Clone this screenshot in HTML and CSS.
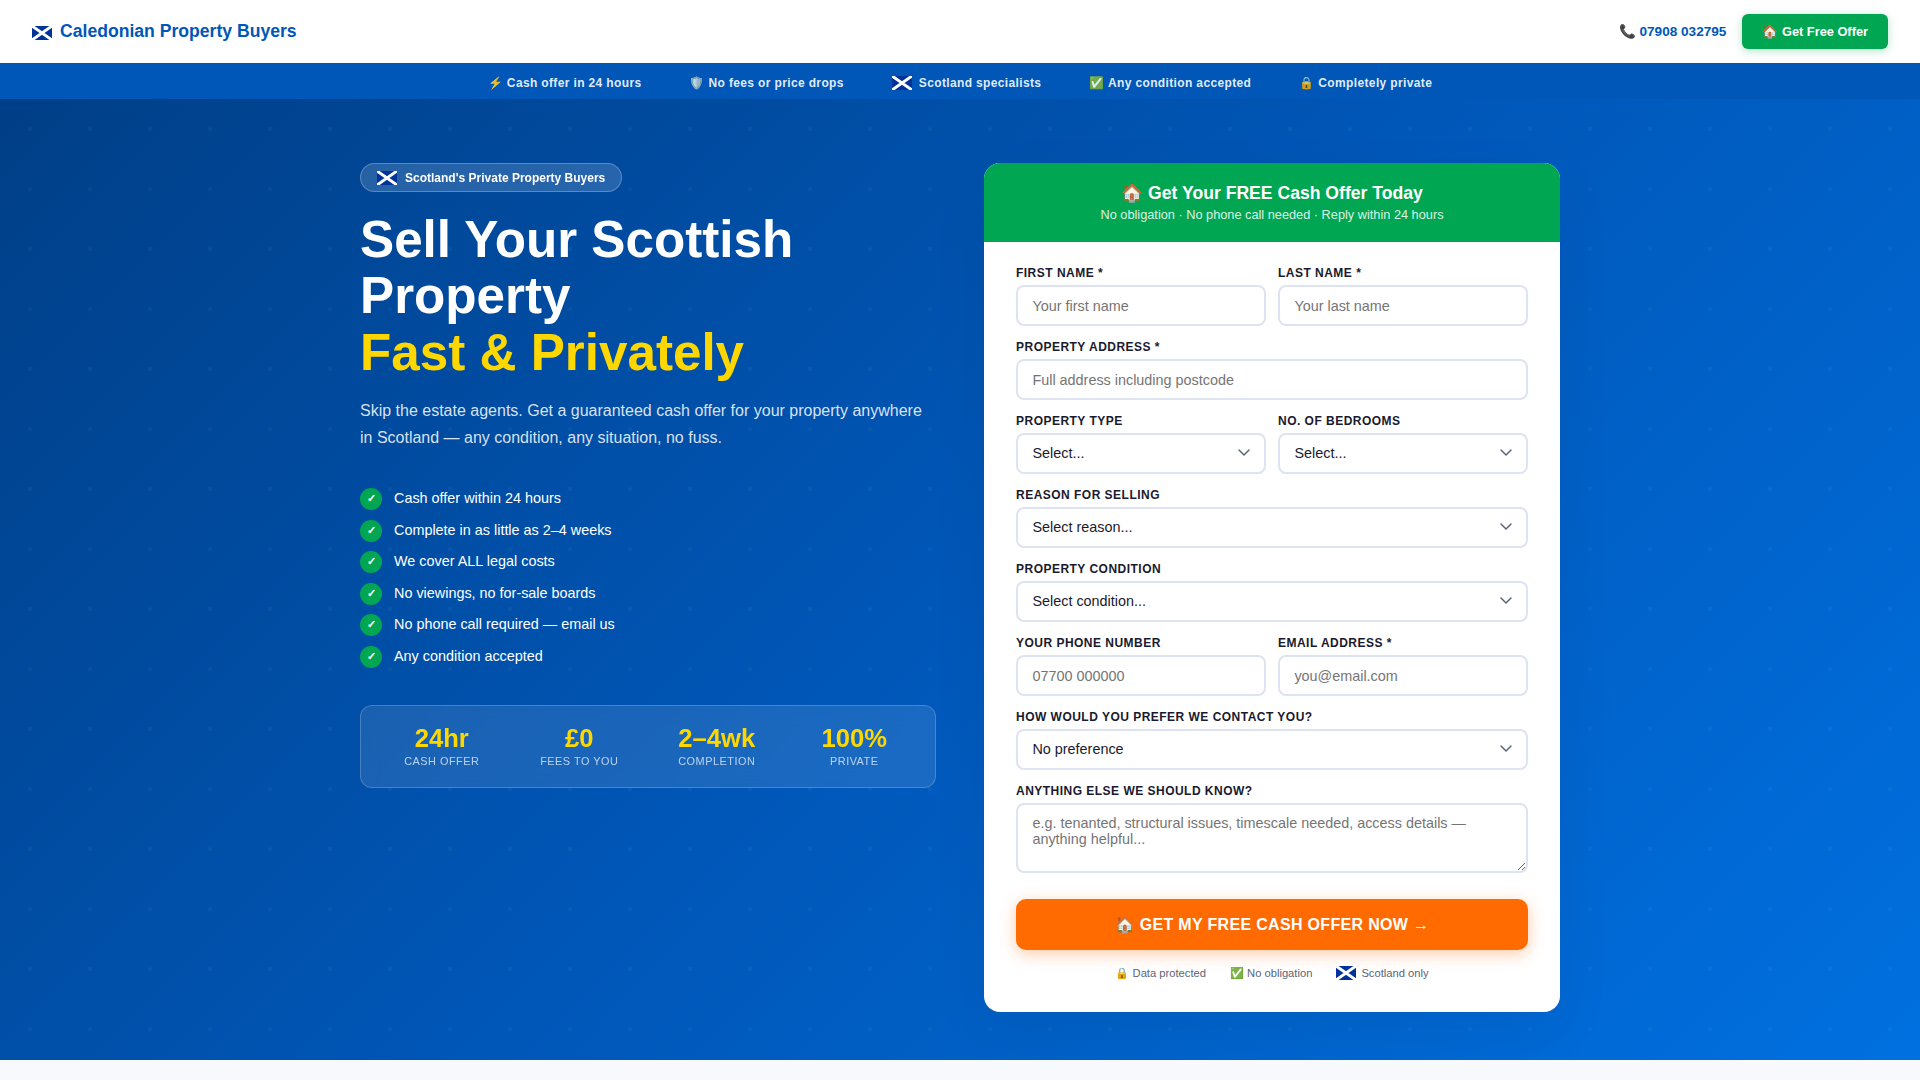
FILE: index.html
```html
<!DOCTYPE html>
<html lang="en">
<head>
    <meta charset="UTF-8">
    <meta name="viewport" content="width=device-width, initial-scale=1.0">
    <title>Caledonian Property Buyers</title>
    <link rel="stylesheet" href="styles.css">
</head>
<body>
    <!-- Saltire used next to the text in several places -->
    <svg class="defs" width="0" height="0">
        <symbol id="saltire" viewBox="0 0 20 14">
            <rect width="20" height="14" fill="#003399"/>
            <path d="M0 0L20 14M20 0L0 14" stroke="#fff" stroke-width="3"/>
        </symbol>
    </svg>

    <!-- Header -->
    <header class="header">
        <a class="logo" href="#"><svg class="flag"><use href="#saltire"/></svg>Caledonian Property Buyers</a>
        <div class="header-right">
            <a class="header-phone" href="tel:07908032795">📞 07908 032795</a>
            <a class="header-btn" href="#form">🏠 Get Free Offer</a>
        </div>
    </header>

    <!-- Trust bar -->
    <div class="trust-bar">
        <span>⚡ Cash offer in 24 hours</span>
        <span>🛡️ No fees or price drops</span>
        <span><svg class="flag"><use href="#saltire"/></svg>Scotland specialists</span>
        <span>✅ Any condition accepted</span>
        <span>🔒 Completely private</span>
    </div>

    <!-- Hero -->
    <section class="hero">
        <div class="hero-inner">
            <div class="hero-left">
                <div class="badge"><svg class="flag"><use href="#saltire"/></svg>Scotland's Private Property Buyers</div>
                <h1>Sell Your Scottish Property<br><span>Fast &amp; Privately</span></h1>
                <p class="hero-sub">Skip the estate agents. Get a guaranteed cash offer for your property anywhere in Scotland — any condition, any situation, no fuss.</p>
                <ul class="checks">
                    <li><i>✓</i>Cash offer within 24 hours</li>
                    <li><i>✓</i>Complete in as little as 2–4 weeks</li>
                    <li><i>✓</i>We cover ALL legal costs</li>
                    <li><i>✓</i>No viewings, no for-sale boards</li>
                    <li><i>✓</i>No phone call required — email us</li>
                    <li><i>✓</i>Any condition accepted</li>
                </ul>
                <div class="stats">
                    <div class="stat"><strong>24hr</strong><span>Cash offer</span></div>
                    <div class="stat"><strong>£0</strong><span>Fees to you</span></div>
                    <div class="stat"><strong>2–4wk</strong><span>Completion</span></div>
                    <div class="stat"><strong>100%</strong><span>Private</span></div>
                </div>
            </div>

            <!-- Offer form -->
            <div class="form-card" id="form">
                <div class="form-head">
                    <h2>🏠 Get Your FREE Cash Offer Today</h2>
                    <p>No obligation · No phone call needed · Reply within 24 hours</p>
                </div>
                <form class="form-body">
                    <div class="row">
                        <div class="field">
                            <label for="first">First Name *</label>
                            <input id="first" type="text" placeholder="Your first name">
                        </div>
                        <div class="field">
                            <label for="last">Last Name *</label>
                            <input id="last" type="text" placeholder="Your last name">
                        </div>
                    </div>
                    <div class="field">
                        <label for="address">Property Address *</label>
                        <input id="address" type="text" placeholder="Full address including postcode">
                    </div>
                    <div class="row">
                        <div class="field">
                            <label for="type">Property Type</label>
                            <div class="select">
                                <select id="type"><option>Select...</option></select>
                                <svg viewBox="0 0 12 8"><path d="M1 1l5 5 5-5"/></svg>
                            </div>
                        </div>
                        <div class="field">
                            <label for="beds">No. of Bedrooms</label>
                            <div class="select">
                                <select id="beds"><option>Select...</option></select>
                                <svg viewBox="0 0 12 8"><path d="M1 1l5 5 5-5"/></svg>
                            </div>
                        </div>
                    </div>
                    <div class="field">
                        <label for="reason">Reason for Selling</label>
                        <div class="select">
                            <select id="reason"><option>Select reason...</option></select>
                            <svg viewBox="0 0 12 8"><path d="M1 1l5 5 5-5"/></svg>
                        </div>
                    </div>
                    <div class="field">
                        <label for="condition">Property Condition</label>
                        <div class="select">
                            <select id="condition"><option>Select condition...</option></select>
                            <svg viewBox="0 0 12 8"><path d="M1 1l5 5 5-5"/></svg>
                        </div>
                    </div>
                    <div class="row">
                        <div class="field">
                            <label for="phone">Your Phone Number</label>
                            <input id="phone" type="tel" placeholder="07700 000000">
                        </div>
                        <div class="field">
                            <label for="email">Email Address *</label>
                            <input id="email" type="email" placeholder="you@email.com">
                        </div>
                    </div>
                    <div class="field">
                        <label for="contact">How would you prefer we contact you?</label>
                        <div class="select">
                            <select id="contact"><option>No preference</option></select>
                            <svg viewBox="0 0 12 8"><path d="M1 1l5 5 5-5"/></svg>
                        </div>
                    </div>
                    <div class="field">
                        <label for="notes">Anything else we should know?</label>
                        <textarea id="notes" placeholder="e.g. tenanted, structural issues, timescale needed, access details — anything helpful..."></textarea>
                    </div>
                    <button class="submit" type="button">🏠 GET MY FREE CASH OFFER NOW →</button>
                    <div class="form-trust">
                        <span>🔒 Data protected</span>
                        <span>✅ No obligation</span>
                        <span><svg class="flag"><use href="#saltire"/></svg>Scotland only</span>
                    </div>
                </form>
            </div>
        </div>
    </section>
</body>
</html>
```
FILE: styles.css
```css
* {
    margin: 0;
    padding: 0;
    box-sizing: border-box;
}

body {
    font-family: 'Liberation Sans', Arial, sans-serif;
    background: #f8f9fd;
    color: #1a1a2e;
    line-height: 1.6;
    overflow: hidden;
}

a {
    text-decoration: none;
}

.defs {
    display: block;
}

.flag {
    width: 20px;
    height: 14px;
    flex-shrink: 0;
}

/* Header */
.header {
    height: 63px;
    background: #fff;
    padding: 0 32px;
    display: flex;
    align-items: center;
    justify-content: space-between;
}

.logo {
    color: #0057b8;
    font-size: 17.6px;
    font-weight: 700;
    display: flex;
    align-items: center;
    gap: 8px;
}

.logo .flag {
    margin-top: 4px;
}

.header-right {
    display: flex;
    align-items: center;
    gap: 16px;
}

.header-phone {
    color: #0057b8;
    font-size: 13.6px;
    font-weight: 700;
}

.header-btn {
    background: #00a651;
    color: #fff;
    font-size: 12.8px;
    font-weight: 700;
    line-height: 15px;
    padding: 10px 20px;
    border-radius: 6px;
    box-shadow: 0 2px 8px rgba(0, 166, 81, 0.3);
}

/* Trust bar */
.trust-bar {
    height: 36px;
    background: #0057b8;
    color: rgba(255, 255, 255, 0.9);
    display: flex;
    justify-content: center;
    align-items: center;
    gap: 48px;
    font-size: 12px;
    font-weight: 700;
    letter-spacing: 0.03em;
}

.trust-bar span {
    display: flex;
    align-items: center;
    gap: 7px;
    white-space: pre;
    padding-top: 5px;
}

.trust-bar .flag {
    margin-top: -1px;
}

/* Hero */
.hero {
    height: 961px;
    padding: 64px 32px 48px;
    background:
        radial-gradient(circle at 30px 30px, rgba(255, 255, 255, 0.04) 2px, transparent 2.2px) 0 0 / 60px 60px,
        linear-gradient(135deg, #003f87 0%, #0057b8 50%, #0070e0 100%);
}

.hero-inner {
    max-width: 1200px;
    margin: 0 auto;
    display: grid;
    grid-template-columns: 1fr 1fr;
    gap: 48px;
    align-items: start;
}

.badge {
    display: inline-flex;
    align-items: center;
    gap: 8px;
    height: 29px;
    padding: 2px 16px 0;
    border: 1px solid rgba(255, 255, 255, 0.25);
    border-radius: 20px;
    background: rgba(255, 255, 255, 0.15);
    backdrop-filter: blur(4px);
    color: #fff;
    font-size: 12px;
    font-weight: 700;
    vertical-align: top;
}

.badge .flag {
    margin-top: -1px;
}

h1 {
    color: #fff;
    font-size: 51.2px;
    line-height: 1.1;
    margin: 20px 0 16px;
}

h1 span {
    color: #ffd700;
}

.hero-sub {
    color: rgba(255, 255, 255, 0.85);
    font-size: 16px;
    line-height: 27px;
    margin-bottom: 36.5px;
}

.checks {
    list-style: none;
    display: flex;
    flex-direction: column;
    gap: 8px;
    margin-bottom: 36.5px;
}

.checks li {
    display: flex;
    align-items: center;
    gap: 12px;
    color: #fff;
    font-size: 14.4px;
    line-height: 23.5px;
}

.checks i {
    width: 22px;
    height: 22px;
    border-radius: 50%;
    background: #00a651;
    display: flex;
    align-items: center;
    justify-content: center;
    font-size: 11.2px;
    font-style: normal;
    font-weight: 700;
}

.stats {
    display: grid;
    grid-template-columns: repeat(4, 1fr);
    gap: 16px;
    height: 83px;
    padding: 19px 20px;
    border: 1px solid rgba(255, 255, 255, 0.2);
    border-radius: 12px;
    background: rgba(255, 255, 255, 0.1);
    backdrop-filter: blur(8px);
    text-align: center;
}

.stat strong {
    display: block;
    color: #ffd700;
    font-size: 25.6px;
    line-height: 26px;
}

.stat span {
    display: block;
    color: rgba(255, 255, 255, 0.7);
    font-size: 10.9px;
    line-height: 21px;
    letter-spacing: 0.5px;
    text-transform: uppercase;
}

/* Form card */
.form-card {
    background: #fff;
    border-radius: 16px;
    overflow: hidden;
    height: 849px;
    box-shadow: 0 20px 60px rgba(0, 0, 0, 0.06);
}

.form-head {
    background: #00a651;
    color: #fff;
    height: 79px;
    padding: 20px 32px;
    text-align: center;
}

.form-head h2 {
    font-size: 17.6px;
    line-height: 21px;
}

.form-head p {
    font-size: 12.75px;
    line-height: 22px;
    opacity: 0.85;
}

.form-body {
    padding: 24px 32px 0;
}

.row {
    display: grid;
    grid-template-columns: 1fr 1fr;
    gap: 12px;
}

.field {
    margin-bottom: 14px;
}

.field label {
    display: block;
    font-size: 12px;
    font-weight: 700;
    line-height: 14px;
    letter-spacing: 0.04em;
    text-transform: uppercase;
    margin-bottom: 5px;
}

input,
select,
textarea {
    display: block;
    width: 100%;
    height: 41px;
    padding: 0 14.4px;
    border: 2px solid #dde3f0;
    border-radius: 8px;
    background: #fff;
    color: #1a1a2e;
    font-family: inherit;
    font-size: 14.4px;
    appearance: none;
}

select {
    padding-bottom: 1px;
}

textarea {
    height: 70px;
    padding-top: 10px;
    resize: vertical;
}

.select {
    position: relative;
}

.select svg {
    position: absolute;
    right: 16px;
    top: 16px;
    width: 12px;
    height: 8px;
    fill: none;
    stroke: #5a6478;
    stroke-width: 1.5;
    stroke-linecap: round;
}

.submit {
    display: block;
    width: 100%;
    height: 51px;
    margin-top: 26px;
    border: none;
    border-radius: 10px;
    background: #ff6b00;
    color: #fff;
    font-family: inherit;
    font-size: 16px;
    font-weight: 700;
    letter-spacing: 0.02em;
    box-shadow: 0 4px 16px rgba(255, 107, 0, 0.35);
}

.form-trust {
    display: flex;
    justify-content: center;
    gap: 24px;
    margin-top: 15px;
    color: #5a6478;
    font-size: 11.2px;
}

.form-trust span {
    display: flex;
    align-items: center;
    gap: 5px;
    white-space: pre;
}

.form-trust .flag {
    margin-top: -1px;
}
```
